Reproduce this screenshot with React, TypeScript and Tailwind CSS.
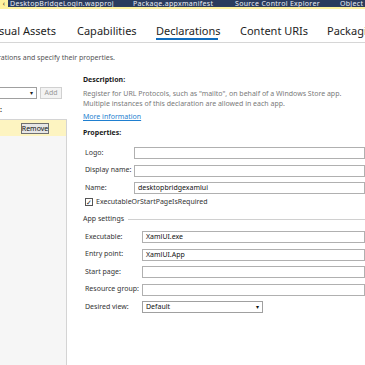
import React from 'react';

const font = { fontFamily: '"Noto Sans", "Open Sans", sans-serif' };

const Field = ({ label, value, labelW, h = 'h-[18px]' }: { label: string; value?: string; labelW: string; h?: string }) => (
  <div className={`flex items-center ${h}`}>
    <div className={`${labelW} shrink-0 text-[7px] text-[#333]`}>{label}</div>
    <div className="flex-1 h-[12px] border border-[#b0b0b0] bg-white text-[7px] text-[#111] pl-[3px] leading-[10px]">
      {value}
    </div>
  </div>
);

const App = () => {
  return (
    <div className="w-[365px] h-[365px] overflow-hidden bg-white flex flex-col" style={font}>
      {/* document tabs */}
      <div className="h-[7px] bg-[#2b3c5e] flex items-center text-[7px] text-[#e8ecf5] leading-[7px] tracking-[0.3px] whitespace-nowrap">
        <div className="w-[8px] shrink-0 h-full bg-[#fff29d] text-[#333] text-center">‹</div>
        <div className="pl-[2px] w-[125px] shrink-0">DesktopBridgeLogin.wapproj</div>
        <div className="w-[102px] shrink-0">Package.appxmanifest</div>
        <div className="w-[105px] shrink-0">Source Control Explorer</div>
        <div className="shrink-0">Object B</div>
      </div>
      <div className="h-[2px] bg-[#fff29d]" />

      {/* section tabs */}
      <div className="h-[34px] shrink-0 border-b border-[#d6d6d6] flex items-end overflow-hidden text-[11px] leading-[14px] text-[#1e1e1e] whitespace-nowrap">
        <div className="-ml-[1px] w-[78px] shrink-0 pb-[4px]">sual Assets</div>
        <div className="w-[79px] shrink-0 pb-[4px]">Capabilities</div>
        <div className="w-[84px] shrink-0 pb-[2px]">
          <div className="w-[62px] border-b-[2px] border-[#0f6cbd]">Declarations</div>
        </div>
        <div className="w-[87px] shrink-0 pb-[4px]">Content URIs</div>
        <div className="shrink-0 pb-[4px]">Packaging</div>
      </div>

      <div className="pt-[10px] text-[7px] leading-[10px] text-[#555] whitespace-nowrap">
        <span className="-ml-[2px] inline-block">rations and specify their properties.</span>
      </div>

      <div className="flex flex-1 mt-[3px]">
        {/* left column */}
        <div className="w-[67px] shrink-0 flex flex-col">
          <div className="flex items-center mt-[21px] gap-[3px]">
            <div className="w-[37px] h-[12px] border border-[#a0a0a0] border-l-0 bg-white flex justify-end items-center pr-[3px] text-[6px] text-[#222]">▾</div>
            <div className="w-[22px] h-[12px] border border-[#d0d0d0] bg-[#f3f3f3] text-[7px] text-[#999] flex items-center justify-center">Add</div>
          </div>
          <div className="mt-[7px] text-[7px] font-bold text-[#222] leading-[8px]">:</div>
          <div className="mt-[5px] flex-1 bg-[#f6f6f6] border-r border-t border-[#d4d4d4]">
            <div className="h-[16px] bg-[#fdf4c1] flex items-center pl-[21px]">
              <div className="w-[28px] h-[11px] border border-[#707070] bg-[#e6e6e6] text-[7px] text-[#111] flex items-center justify-center leading-[9px]">Remove</div>
            </div>
          </div>
        </div>

        {/* right column */}
        <div className="flex-1 pl-[16px] pt-[9px] flex flex-col">
          <div className="text-[7px] font-bold text-[#1a1a1a] leading-[10px]">Description:</div>
          <div className="mt-[4px] text-[7px] text-[#7a7a7a] leading-[10px] whitespace-nowrap">
            Register for URL Protocols, such as "mailto", on behalf of a Windows Store app.
          </div>
          <div className="text-[7px] text-[#7a7a7a] leading-[10px] whitespace-nowrap">
            Multiple instances of this declaration are allowed in each app.
          </div>
          <div className="mt-[3px] text-[7px] text-[#1f7fd0] underline leading-[10px]">More information</div>
          <div className="mt-[6px] text-[7px] font-bold text-[#1a1a1a] leading-[10px]">Properties:</div>

          <div className="mt-[6px] pl-[2px] flex flex-col">
            <Field label="Logo:" labelW="w-[49px]" />
            <Field label="Display name:" labelW="w-[49px]" h="h-[17px]" />
            <Field label="Name:" value="desktopbridgexamlui" labelW="w-[49px]" />
          </div>

          <div className="flex items-center gap-[3px] pl-[2px] h-[10px]">
            <div className="w-[8px] h-[8px] border border-[#555] bg-white flex items-center justify-center text-[7px] leading-[7px] text-[#222]">✓</div>
            <div className="text-[7px] text-[#333]">ExecutableOrStartPageIsRequired</div>
          </div>

          <div className="flex items-center mt-[7px] h-[10px]">
            <div className="text-[7px] text-[#333] pr-[4px]">App settings</div>
            <div className="flex-1 h-px bg-[#d0d0d0]" />
          </div>

          <div className="mt-[4px] pl-[2px] flex flex-col">
            <Field label="Executable:" value="XamlUI.exe" labelW="w-[57px]" />
            <Field label="Entry point:" value="XamlUI.App" labelW="w-[57px]" h="h-[17px]" />
            <Field label="Start page:" labelW="w-[57px]" />
            <Field label="Resource group:" labelW="w-[57px]" h="h-[17px]" />
            <div className="flex items-center h-[18px]">
              <div className="w-[57px] shrink-0 text-[7px] text-[#333]">Desired view:</div>
              <div className="w-[121px] h-[12px] border border-[#a0a0a0] bg-white flex items-center justify-between pl-[3px] pr-[3px] text-[7px] text-[#111]">
                <span>Default</span>
                <span className="text-[6px]">▾</span>
              </div>
            </div>
          </div>
        </div>
      </div>
    </div>
  );
};

export default App;
